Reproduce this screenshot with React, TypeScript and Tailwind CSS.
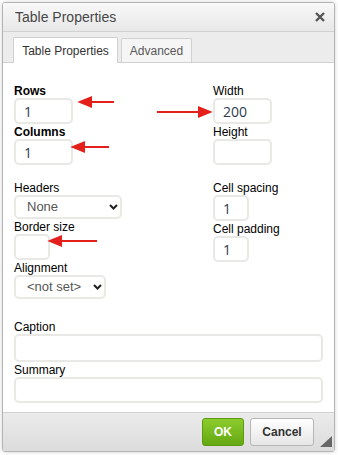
import React from "react";

const label = "block h-[14px] text-[12px] leading-[14px] text-black";
const input =
  "block h-[26px] rounded-[5px] border-2 border-[#e8e8e4] bg-white pl-[8px] text-[14px] text-[#2e3b4b] outline-none [font-family:'Open_Sans',sans-serif]";

function Field({ name, bold = false, value = "", w, h = 26 }: { name: string; bold?: boolean; value?: string; w: string; h?: number }) {
  return (
    <div className="flex flex-col">
      <span className={label + (bold ? " font-bold" : "")}>{name}</span>
      <input readOnly value={value} className={input + " " + w} style={{ height: h }} />
    </div>
  );
}

function Select({ value, w }: { value: string; w: string }) {
  return (
    <div className={"relative h-[24px] " + w}>
      <div className="flex h-full items-center rounded-[5px] border-2 border-[#e8e8e4] bg-white pl-[11px] text-[13px] text-[#555]">
        {value}
      </div>
      <svg className="absolute right-[4px] top-[9px]" width="9" height="6" viewBox="0 0 9 6">
        <path d="M1 1 L4.5 4.5 L8 1" fill="none" stroke="#222" strokeWidth="2" />
      </svg>
    </div>
  );
}

function Arrow({ x1, x2, y }: { x1: number; x2: number; y: number }) {
  // tip at x2
  const dir = x2 < x1 ? 1 : -1;
  const hx = x2 + dir * 11;
  return (
    <path
      d={`M${x1} ${y} L${hx} ${y} M${x2} ${y} L${hx} ${y - 4.5} L${hx} ${y + 4.5} Z`}
      stroke="#e3201b"
      strokeWidth="2"
      fill="#e3201b"
    />
  );
}

export default function App() {
  return (
    <div className="relative h-[455px] w-[338px] overflow-hidden bg-white [font-family:'Liberation_Sans',Arial,sans-serif]">
      <div className="ml-[2px] mt-[2px] flex h-[450px] w-[333px] flex-col overflow-hidden rounded-[3px] border border-[#b4b4b4] shadow-[0_0_4px_rgba(0,0,0,0.18)]">
        {/* title */}
        <div className="flex h-[29px] shrink-0 items-center justify-between border-b border-[#d1d1d1] bg-gradient-to-b from-[#f8f8f8] to-[#e8e8e8] pl-[12px] pr-[9px]">
          <span className="text-[14px] text-[#474747]">Table Properties</span>
          <svg width="10" height="10" viewBox="0 0 10 10">
            <path d="M1 1 L9 9 M9 1 L1 9" stroke="#555" strokeWidth="2.4" />
          </svg>
        </div>
        {/* tabs */}
        <div className="flex h-[31px] shrink-0 items-end gap-[3px] border-b border-[#d1d1d1] bg-[#ececec] pl-[10px]">
          <div className="-mb-px flex h-[26px] w-[105px] items-center justify-center rounded-t-[2px] border border-b-0 border-[#d1d1d1] bg-white text-[12px] text-[#333]">
            Table Properties
          </div>
          <div className="flex h-[24px] w-[71px] items-center justify-center rounded-t-[2px] border border-b-0 border-[#d1d1d1] bg-[#f5f5f5] text-[12px] text-[#595959]">
            Advanced
          </div>
        </div>
        {/* body */}
        <div className="flex flex-1 flex-col bg-white px-[11px] pt-[21px]">
          <div className="flex">
            <div className="flex w-[199px] flex-col">
              <div className="flex flex-col gap-[1px]">
                <Field name="Rows" bold value="1" w="w-[59px]" />
                <Field name="Columns" bold value="1" w="w-[59px]" />
              </div>
              <div className="mt-[16px] flex flex-col gap-[1px]">
                <div className="flex flex-col">
                  <span className={label}>Headers</span>
                  <Select value="None" w="w-[108px]" />
                </div>
                <Field name="Border size" w="w-[36px]" />
                <div className="flex flex-col">
                  <span className={label}>Alignment</span>
                  <Select value="<not set>" w="w-[92px]" />
                </div>
              </div>
            </div>
            <div className="flex flex-col">
              <div className="flex flex-col gap-[1px]">
                <Field name="Width" value="200" w="w-[59px]" />
                <Field name="Height" w="w-[59px]" />
              </div>
              <div className="mt-[16px] flex flex-col gap-[1px]">
                <Field name="Cell spacing" value="1" w="w-[36px]" />
                <Field name="Cell padding" value="1" w="w-[36px]" />
              </div>
            </div>
          </div>
          <div className="mt-[21px] flex flex-col gap-[1px]">
            <Field name="Caption" w="w-full" h={28} />
            <Field name="Summary" w="w-full" h={26} />
          </div>
        </div>
        {/* footer */}
        <div className="relative flex h-[39px] shrink-0 items-center justify-end gap-[6px] border-t border-[#d1d1d1] bg-gradient-to-b from-[#ebebeb] to-[#dcdcdc] pr-[20px]">
          <button className="h-[28px] w-[42px] rounded-[3px] border border-[#5b9a12] bg-gradient-to-b from-[#8ccc2c] to-[#64a812] text-[12px] font-bold text-white">
            OK
          </button>
          <button className="h-[28px] w-[64px] rounded-[3px] border border-[#b6b6b6] bg-gradient-to-b from-white to-[#e6e6e6] text-[12px] font-bold text-[#333]">
            Cancel
          </button>
          <svg className="absolute bottom-[4px] right-[2px]" width="12" height="11" viewBox="0 0 12 11">
            <path d="M12 0 L12 11 L0 11 Z" fill="#666" />
          </svg>
        </div>
      </div>
      {/* annotation arrows */}
      <svg className="pointer-events-none absolute left-0 top-0" width="338" height="455">
        <Arrow x1={114} x2={80} y={102} />
        <Arrow x1={157} x2={210} y={112} />
        <Arrow x1={109} x2={73} y={147} />
        <Arrow x1={97} x2={50} y={241} />
      </svg>
    </div>
  );
}
